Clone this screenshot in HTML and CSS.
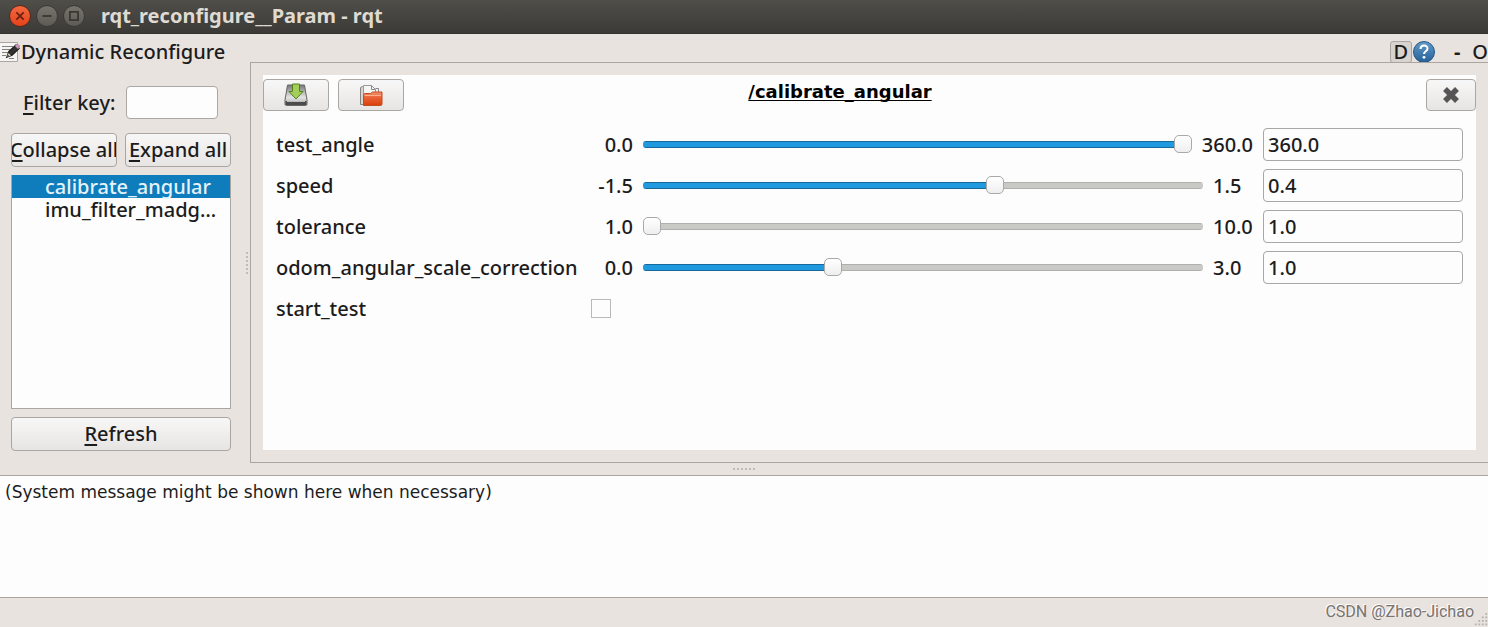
FILE: index.html
```html
<!DOCTYPE html>
<html lang="en">
<head>
<meta charset="utf-8">
<title>rqt_reconfigure__Param - rqt</title>
<link rel="stylesheet" href="styles.css">
</head>
<body>
<div class="window">
  <header class="titlebar">
    <button class="win-btn win-close" aria-label="Close window"><svg viewBox="0 0 22 22"><path d="M7 7l8 8M15 7l-8 8"/></svg></button>
    <button class="win-btn" aria-label="Minimize window"><svg viewBox="0 0 22 22"><path d="M6 11h10"/></svg></button>
    <button class="win-btn" aria-label="Maximize window"><svg viewBox="0 0 22 22"><path d="M6.500 6.500h9v9h-9z"/></svg></button>
    <h1 class="win-title">rqt_reconfigure__Param - rqt</h1>
  </header>

  <div class="dock-head">
    <svg class="edit-icon" viewBox="0 0 20 22" aria-hidden="true">
      <path d="M-2 1.500h19.500v19H-2z" fill="#f6f5f4" stroke="#aaa6a3"/>
      <path d="M2 5.500h11M2 8.500h8M2 11.500h6M2 14.500h4M9 17.500h5" stroke="#85817f"/>
      <path d="M7 16l2-5.500 7-6.500 3 3.500-7 6.500z" fill="#333" stroke="#222" stroke-width="1.500"/>
      <path d="M7 16l1.500-4 2.500 2.500z" fill="#d8cdb8"/><path d="M7 16l1-2 1 1z" fill="#111"/>
      <path d="M15 5l2-2 3 2-2 3z" fill="#c79bb5" stroke="#95718a" stroke-width=".6"/>
    </svg>
    <h2 class="dock-title">Dynamic Reconfigure</h2>
    <div class="dock-tools">
      <button class="d-btn">D</button>
      <button class="help-btn" aria-label="Help"><svg viewBox="0 0 24 24">
        <defs><linearGradient id="help" x2="0" y2="1"><stop stop-color="#659bc9"/><stop offset="1" stop-color="#245f97"/></linearGradient></defs>
        <circle cx="12" cy="12" r="10.500" fill="url(#help)" stroke="#225887"/>
        <path d="M8.500 9c0-4.500 7-4.500 7-.5 0 3-3.500 2.500-3.500 5.500" fill="none" stroke="#fff" stroke-width="2"/><circle cx="12" cy="17.300" r="1.400" fill="#fff"/>
      </svg></button>
      <button class="text-btn dash">-</button>
      <button class="text-btn">O</button>
    </div>
  </div>

  <main class="workspace">
    <aside class="sidebar">
      <div class="filter">
        <label for="filter"><u>F</u>ilter key:</label>
        <input id="filter" class="field filter-field" type="text">
      </div>
      <div class="button-pair">
        <button class="btn"><span><u>C</u>ollapse all</span></button>
        <button class="btn"><span><u>E</u>xpand all</span></button>
      </div>
      <ul class="nodes">
        <li class="node selected">calibrate_angular</li>
        <li class="node">imu_filter_madgwick</li>
      </ul>
      <button class="btn"><span><u>R</u>efresh</span></button>
    </aside>
    <div class="grip-v" aria-hidden="true"></div>

    <section class="frame">
      <div class="panel">
        <div class="panel-head">
          <button class="btn icon-btn" aria-label="Save parameters"><svg viewBox="0 0 24 24">
            <defs><linearGradient id="disk" x2="0" y2="1"><stop stop-color="#777"/><stop offset=".6" stop-color="#e2e2e2"/><stop offset="1" stop-color="#aaa"/></linearGradient></defs>
            <path d="M3.500 2h17L23 17v4q0 1.500-1.500 1.500h-19Q1 22.500 1 21v-4z" fill="url(#disk)" stroke="#666"/>
            <path d="M1.500 18h21v4h-21z" fill="#4b4b4b"/><path d="M3 18.500h18" stroke="#bbb"/>
            <path d="M8.500 1h7v7.500h3.500L12 16 5 8.500h3.500z" fill="#a3cf58" stroke="#568321"/>
          </svg></button>
          <button class="btn icon-btn" aria-label="Load parameters"><svg viewBox="0 0 24 24">
            <defs><linearGradient id="folder" x2="0" y2="1"><stop stop-color="#f49468"/><stop offset=".4" stop-color="#ea6237"/><stop offset="1" stop-color="#d93e0b"/></linearGradient></defs>
            <path d="M1.500 21.500v-17l2-1H8v18z" fill="#d8d6d3" stroke="#89837f"/>
            <path d="M4.500 20V2.500h8l4 4V12" fill="#f5f5f4" stroke="#999"/>
            <path d="M12.500 2.500v4h4M16.500 5.500h3V9" fill="none" stroke="#888"/>
            <path d="M4.500 12l1-1.500h6l2-1.500h9.500v12q0 1.500-1.500 1.500h-17z" fill="url(#folder)" stroke="#c34b24"/>
            <path d="M5.500 12.500H22" stroke="#f9b08c"/>
          </svg></button>
          <h3 class="panel-title">/calibrate_angular</h3>
          <button class="btn close-btn" aria-label="Close panel"><svg viewBox="0 0 18 18"><path d="M3 3l12 12M15 3L3 15" stroke="#555" stroke-width="5.500"/></svg></button>
        </div>
        <form class="params">
          <div class="param">
            <label for="angle">test_angle</label><span class="min">0.0</span>
            <input class="slider" type="range" aria-label="test_angle slider" min="0" max="360" step="any" value="360" style="--pos:1">
            <span class="max">360.0</span><input id="angle" class="field" type="text" value="360.0">
          </div>
          <div class="param">
            <label for="speed">speed</label><span class="min">-1.5</span>
            <input class="slider" type="range" aria-label="speed slider" min="-1.5" max="1.5" step="any" value="0.4" style="--pos:.633">
            <span class="max">1.5</span><input id="speed" class="field" type="text" value="0.4">
          </div>
          <div class="param">
            <label for="tolerance">tolerance</label><span class="min">1.0</span>
            <input class="slider" type="range" aria-label="tolerance slider" min="1" max="10" step="any" value="1" style="--pos:0">
            <span class="max">10.0</span><input id="tolerance" class="field" type="text" value="1.0">
          </div>
          <div class="param">
            <label for="scale">odom_angular_scale_correction</label><span class="min">0.0</span>
            <input class="slider" type="range" aria-label="odom_angular_scale_correction slider" min="0" max="3" step="any" value="1" style="--pos:.333">
            <span class="max">3.0</span><input id="scale" class="field" type="text" value="1.0">
          </div>
          <div class="param">
            <label for="start">start_test</label><input id="start" class="check" type="checkbox">
          </div>
        </form>
      </div>
    </section>
  </main>
  <div class="grip-h" aria-hidden="true"></div>

  <section class="messages">(System message might be shown here when necessary)</section>
  <footer class="status">
    <span class="credit">CSDN @Zhao-Jichao</span>
    <svg class="resize" viewBox="0 0 16 16" aria-hidden="true"><path d="M13 1h2M9 5h2M13 5h2M5 9h2M9 9h2M13 9h2M1 13h2M5 13h2M9 13h2M13 13h2" stroke="#b5afaa" stroke-width="2"/></svg>
  </footer>
</div>
</body>
</html>
```
FILE: styles.css
```css
* { box-sizing: border-box; }
body {
  margin: 0;
  background: #e9e3e0;
  color: #1c1c1c;
  font: 500 20px/24px "Noto Sans", sans-serif;
}
button, input { font: inherit; color: inherit; margin: 0; }
button { padding: 0; }
h1, h2, h3 { margin: 0; font-size: inherit; }
u { text-underline-offset: 3px; text-decoration-thickness: 2px; text-decoration-skip-ink: none; }
.window { display: flex; flex-direction: column; min-height: 100vh; overflow: hidden; }

.titlebar {
  display: flex;
  align-items: center;
  gap: 5px;
  height: 34px;
  padding: 0 9px 2px;
  background: linear-gradient(#504e49, #3b3a36);
  border-bottom: 1px solid #33322f;
}
.win-btn {
  width: 22px;
  height: 22px;
  border: 1px solid #3a3935;
  border-radius: 50%;
  background: linear-gradient(#76746d, #5d5b55);
}
.win-btn svg { display: block; width: 20px; height: 20px; fill: none; stroke: #383732; stroke-width: 2; }
.win-close { background: linear-gradient(#f4683f, #e5421b); border-color: #55291d; }
.win-close svg { stroke: #6a2312; }
.win-title { margin-left: 11px; color: #dfdbd2; font-size: 20px; font-weight: 700; }

.dock-head { display: flex; align-items: center; height: 28px; padding-top: 8px; }
.edit-icon { width: 20px; height: 22px; flex: none; }
.dock-title { font-weight: 500; margin-left: 1px; }
.dock-tools { display: flex; align-items: center; margin-left: auto; }
.d-btn { width: 22px; height: 22px; line-height: 20px; border: 1px solid #aaa5a1; border-radius: 3px; background: #d8d3cf; }
.help-btn { width: 24px; height: 24px; border: 0; background: none; }
.help-btn svg { display: block; width: 24px; height: 24px; }
.text-btn { border: 0; background: none; }
.dash { margin: 0 12px 0 18px; font-weight: 700; }

.workspace { display: flex; flex: 1; }
.sidebar { display: flex; flex-direction: column; width: 220px; margin: 24px 0 12px 11px; }
.filter { display: flex; align-items: center; gap: 11px; padding: 0 13px 0 12px; }
.filter label { white-space: nowrap; }
.filter-field { flex: 1; min-width: 0; }
.field {
  height: 33px;
  padding: 0 4px 1px;
  border: 1px solid #aaa6a3;
  border-radius: 4px;
  background: #fdfdfd;
}
.btn {
  display: flex;
  align-items: center;
  justify-content: center;
  height: 34px;
  overflow: hidden;
  white-space: nowrap;
  border: 1px solid #aaa6a3;
  border-radius: 4px;
  background: linear-gradient(#f8f7f7, #e7e5e3);
}
.button-pair { display: grid; grid-template-columns: 1fr 1fr; gap: 8px; margin: 14px 0 8px; }
.button-pair .btn { min-width: 0; }
.nodes { flex: 1; margin: 0 0 8px; padding: 0; list-style: none; background: #fdfdfd; border: 1px solid #aaa6a3; border-top: 0; }
.node { height: 23px; padding: 0 5px 0 33px; line-height: 23px; overflow-x: clip; overflow-y: visible; white-space: nowrap; text-overflow: ellipsis; }
.selected { background: #0f7dbb; color: #e4f3fb; }
.grip-v { align-self: center; width: 2px; height: 22px; margin: 0 2px 0 15px; background: repeating-linear-gradient(#c1bbb7 0 2px, transparent 2px 4px); }

.frame { display: flex; flex: 1; min-width: 0; padding: 12px; border: 1px solid #aaa5a1; border-right: 0; }
.panel { flex: 1; min-width: 0; background: #fdfdfd; }
.panel-head { display: flex; align-items: center; gap: 9px; padding-top: 4px; }
.icon-btn { width: 66px; height: 32px; }
.icon-btn svg { width: 24px; height: 24px; }
.close-btn { width: 50px; height: 32px; }
.close-btn svg { width: 18px; height: 18px; }
.panel-title {
  flex: 1;
  padding: 0 150px 6px 0;
  text-align: center;
  font: 700 18px/24px "DejaVu Sans", sans-serif;
  color: #000;
  text-decoration: underline;
  text-underline-offset: 2px;
  text-decoration-skip-ink: none;
}
.params { display: grid; gap: 8px; padding: 17px 13px 0; }
.param { display: flex; align-items: center; gap: 10px; min-height: 33px; }
.param label { width: 305px; white-space: nowrap; }
.min { width: 42px; text-align: right; }
.max { min-width: 40px; }
.param .field { width: 200px; }
.slider { -webkit-appearance: none; appearance: none; flex: 1; min-width: 0; height: 20px; background: none; }
.slider::-webkit-slider-runnable-track {
  --fill: calc(9px + (100% - 18px) * var(--pos));
  height: 7px;
  border-radius: 3px;
  background:
    linear-gradient(#17699c 1px, transparent 1px 6px, #17699c 6px) 0 0 / var(--fill) 100% no-repeat,
    linear-gradient(#2199df, #2199df) 0 0 / var(--fill) 100% no-repeat,
    linear-gradient(#afafac 1px, #c9c9c6 1px 6px, #afafac 6px);
}
.slider::-webkit-slider-thumb {
  -webkit-appearance: none;
  width: 18px;
  height: 18px;
  margin-top: -6px;
  border: 1px solid #a9a9a9;
  border-radius: 5px;
  background: linear-gradient(#fff, #eee);
}
.check { -webkit-appearance: none; appearance: none; width: 20px; height: 19px; border: 1px solid #b9b9b9; background: #fdfdfd; }
.check:checked { background: #2199df; }

.grip-h { width: 22px; height: 2px; margin: 5px auto; background: repeating-linear-gradient(90deg, #c1bbb7 0 2px, transparent 2px 4px); }
.messages { min-height: 123px; padding: 4px 5px; background: #fdfdfd; border: solid #aaa5a1; border-width: 1px 0; font: 17px/24px "DejaVu Sans", sans-serif; }
.status { display: flex; align-items: center; justify-content: flex-end; height: 29px; }
.credit { padding-bottom: 2px; color: #77736f; font: 400 16px/24px Roboto, sans-serif; text-shadow: -1px -1px #fff; }
.resize { align-self: flex-end; width: 14px; height: 14px; }
```
